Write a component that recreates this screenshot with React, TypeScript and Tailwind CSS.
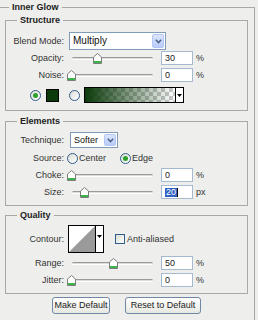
import type { ReactNode } from "react";

const LINE = "border-[#a9a9a4]";

const Thumb = ({ left }: { left: number }) => (
  <svg
    width="9"
    height="11"
    viewBox="0 0 9 11"
    className="absolute top-[2px]"
    style={{ left }}
  >
    <path d="M0.5 10.5V4L4.5 0.5L8.5 4V10.5Z" fill="#ffffff" stroke="#7c7c7c" />
    <rect x="1" y="8" width="7" height="2" fill="#39b54a" />
  </svg>
);

const Slider = ({ at }: { at: number }) => (
  <div className="relative w-[89px] h-[14px] ml-[2px]">
    <div className="absolute left-[6px] top-[6px] w-[81px] h-[3px] rounded-full border-t border-[#9a9a9a] border-b border-b-white bg-[#dcdcdc]" />
    <Thumb left={at - 66 - 4} />
  </div>
);

const NumBox = ({ children }: { children: ReactNode }) => (
  <div className="ml-[6px] w-[32px] h-[14px] bg-white border border-[#a5b9d0] flex items-center pl-[3px] text-[#222]">
    {children}
  </div>
);

const Label = ({ children }: { children: ReactNode }) => (
  <div className="w-[58px] text-right shrink-0">{children}</div>
);

const SliderRow = ({
  label,
  at,
  value,
  unit,
  className,
}: {
  label: string;
  at: number;
  value: ReactNode;
  unit: string;
  className: string;
}) => (
  <div className={`flex items-center h-[14px] ${className}`}>
    <Label>{label}</Label>
    <Slider at={at} />
    <NumBox>{value}</NumBox>
    <span className="ml-[3px]">{unit}</span>
  </div>
);

const Radio = ({ on }: { on?: boolean }) => (
  <div className="w-[11px] h-[11px] rounded-full border border-[#2f5d8c] bg-linear-to-br from-[#dcdcd4] to-white flex items-center justify-center shrink-0">
    {on && <div className="w-[5px] h-[5px] rounded-full bg-[#2ca02c]" />}
  </div>
);

const Caret = () => (
  <svg width="5" height="3" viewBox="0 0 5 3">
    <path d="M0 0H5L2.5 3Z" fill="#000" />
  </svg>
);

const ComboButton = () => (
  <div className="w-[12px] h-full rounded-[2px] border border-[#b2c6f4] bg-linear-to-b from-[#dbe5fd] to-[#b8ccfa] flex items-center justify-center">
    <svg width="7" height="5" viewBox="0 0 7 5">
      <path d="M0.8 0.8L3.5 3.6L6.2 0.8" fill="none" stroke="#4d6185" strokeWidth="1.5" />
    </svg>
  </div>
);

const Group = ({
  title,
  className,
  bodyClass,
  children,
}: {
  title: string;
  className: string;
  bodyClass: string;
  children: ReactNode;
}) => (
  <div className={className}>
    <div className="flex h-[10px]">
      <div className={`w-[12px] h-[5px] self-end border-l border-t ${LINE}`} />
      <span className="px-[3px] font-bold text-[#222] leading-[10px]">{title}</span>
      <div className={`flex-1 h-[5px] self-end border-t border-r ${LINE}`} />
    </div>
    <div className={`border-l border-r border-b ${LINE} ${bodyClass}`}>{children}</div>
  </div>
);

export default function App() {
  return (
    <div
      className="w-[258px] h-[320px] overflow-hidden bg-[#eeeeec] text-[9px] leading-none text-[#333] flex flex-col pr-[3px]"
      style={{ fontFamily: '"Liberation Sans", Arial, sans-serif' }}
    >
      <div className="flex h-[10px] mt-[2px] shrink-0">
        <div className={`w-[9px] h-[5px] self-end border-t ${LINE}`} />
        <span className="px-[3px] font-bold text-[#222] leading-[10px]">Inner Glow</span>
        <div className={`flex-1 h-[5px] self-end border-t border-r ${LINE}`} />
      </div>
      <div className={`flex-1 border-r ${LINE} pl-[5px] pr-[6px] flex flex-col`}>
        <Group title="Structure" className="mt-[3px]" bodyClass="pt-[7px] pb-[7px]">
          <div className="flex items-center h-[18px]">
            <Label>Blend Mode:</Label>
            <div className="ml-[5px] w-[97px] h-[18px] bg-white border border-[#7f9db9] flex items-center justify-between pl-[3px] p-[1px] text-[10px] text-[#111]">
              <span>Multiply</span>
              <ComboButton />
            </div>
          </div>
          <SliderRow className="mt-[1px]" label="Opacity:" at={97} value="30" unit="%" />
          <SliderRow className="mt-[3px]" label="Noise:" at={71} value="0" unit="%" />
          <div className="flex items-center h-[16px] mt-[5px]">
            <div className="ml-[24px]">
              <Radio on />
            </div>
            <div className="ml-[5px] w-[13px] h-[13px] bg-[#0b3a0b] border border-black" />
            <div className="ml-[10px]">
              <Radio />
            </div>
            <div className="ml-[4px] w-[100px] h-[16px] border border-black flex bg-white">
              <div className="relative flex-1 bg-[repeating-conic-gradient(#c9c9c9_0%_25%,#ffffff_0%_50%)] bg-[length:8px_8px]">
                <div className="absolute inset-0 bg-linear-to-r from-[#0b3a0b] to-transparent" />
              </div>
              <div className="w-[8px] border-l border-black flex items-center justify-center">
                <Caret />
              </div>
            </div>
          </div>
        </Group>

        <Group title="Elements" className="mt-[5px]" bodyClass="pt-[6px] pb-[6px]">
          <div className="flex items-center h-[16px]">
            <Label>Technique:</Label>
            <div className="ml-[6px] w-[48px] h-[16px] bg-white border border-[#7f9db9] flex items-center justify-between pl-[3px] p-[1px] text-[#111]">
              <span>Softer</span>
              <ComboButton />
            </div>
          </div>
          <div className="flex items-center h-[11px] mt-[5px]">
            <Label>Source:</Label>
            <div className="ml-[3px]">
              <Radio />
            </div>
            <span className="ml-[1px] w-[41px]">Center</span>
            <Radio on />
            <span className="ml-[1px]">Edge</span>
          </div>
          <SliderRow className="mt-[4px]" label="Choke:" at={71} value="0" unit="%" />
          <SliderRow
            className="mt-[3px]"
            label="Size:"
            at={84}
            value={
              <span className="flex items-center">
                <span className="bg-[#3163c5] text-white px-[1px]">20</span>
                <span className="w-px h-[9px] bg-black" />
              </span>
            }
            unit="px"
          />
        </Group>

        <Group title="Quality" className="mt-[4px]" bodyClass="pt-[5px] pb-[6px]">
          <div className="flex items-center h-[28px]">
            <Label>Contour:</Label>
            <div className="ml-[4px] w-[36px] h-[28px] border border-black flex bg-white">
              <svg width="26" height="26" viewBox="0 0 26 26" className="shrink-0">
                <path d="M0 26L26 0V26Z" fill="#9a9a9a" />
              </svg>
              <div className="flex-1 border-l border-black flex justify-center pt-[9px]">
                <Caret />
              </div>
            </div>
            <div className="ml-[11px] w-[10px] h-[10px] border border-[#2f5d8c] bg-linear-to-br from-[#dcdcd4] to-white" />
            <span className="ml-[2px]">Anti-aliased</span>
          </div>
          <SliderRow className="mt-[3px]" label="Range:" at={113} value="50" unit="%" />
          <SliderRow className="mt-[3px]" label="Jitter:" at={71} value="0" unit="%" />
        </Group>

        <div className="flex justify-center gap-[15px] mt-[3px]">
          <button className="w-[58px] h-[17px] rounded-[3px] border border-[#6f87a4] bg-linear-to-b from-white to-[#e8e8e2] text-[#222]">
            Make Default
          </button>
          <button className="w-[76px] h-[17px] rounded-[3px] border border-[#6f87a4] bg-linear-to-b from-white to-[#e8e8e2] text-[#222]">
            Reset to Default
          </button>
        </div>
      </div>
    </div>
  );
}
